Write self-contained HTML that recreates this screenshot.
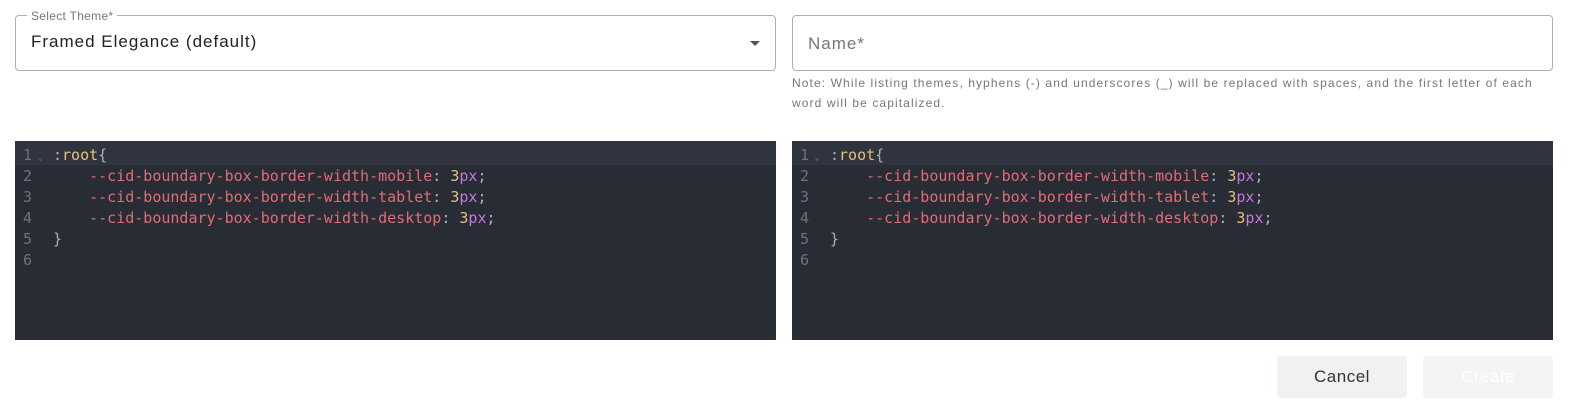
<!DOCTYPE html>
<html><head><style>
*{box-sizing:border-box}
body{margin:0;width:1571px;height:414px;background:#fff;font-family:"Liberation Sans",sans-serif;position:relative;overflow:hidden}
.fs{position:absolute;left:15px;top:15px;width:761px;height:56px;border:1px solid #b0b0b0;border-radius:4px}
.lg{position:absolute;left:27px;top:9px;background:#fff;padding:0 4px;font-size:12px;color:#777;letter-spacing:.3px}
.val{position:absolute;left:31px;top:32px;font-size:17px;color:#222;letter-spacing:1px}
.arr{position:absolute;left:750px;top:41px;width:0;height:0;border-left:5px solid transparent;border-right:5px solid transparent;border-top:5px solid #555}
.nm{position:absolute;left:792px;top:15px;width:761px;height:56px;border:1px solid #b0b0b0;border-radius:4px}
.nm span{position:absolute;left:15px;top:18px;font-size:17px;color:#777;letter-spacing:1px}
.note{position:absolute;left:792px;top:73px;width:770px;font-size:12px;color:#777;line-height:20px;letter-spacing:1.1px;white-space:nowrap}
.ed{position:absolute;top:141px;width:761px;height:199px;background:#282c34;font-family:"DejaVu Sans Mono",monospace;font-size:15px}
.ln{height:21px;line-height:21px;position:relative;white-space:pre;color:#abb2bf;top:1px}
.ln:first-child{background:#2f343e;height:24px;line-height:28px;top:0}
.n{position:absolute;left:8px;color:#6b7280;width:20px}
.c{position:absolute;left:38px}
.r{color:#e06c75}.y{color:#e5c07b}.p{color:#c678dd}
.btn{position:absolute;top:356px;width:130px;height:42px;border-radius:4px;background:#f0f1f1;font-size:17px;text-align:center;line-height:42px;letter-spacing:.5px}
</style></head><body>
<div class="fs"></div><div class="lg">Select Theme*</div><div class="val">Framed Elegance (default)</div><div class="arr"></div>
<div class="nm"><span>Name*</span></div>
<div class="note">Note: While listing themes, hyphens (-) and underscores (_) will be replaced with spaces, and the first letter of each<br>word will be capitalized.</div>
<div class="ed" style="left:15px">
<div class="ln"><span class="n">1<span style="font-size:9px"> ⌄</span></span><span class="c">:<span class="y">root</span>{</span></div>
<div class="ln"><span class="n">2</span><span class="c">    <span class="r">--cid-boundary-box-border-width-mobile</span>: <span class="y">3</span><span class="p">px</span>;</span></div>
<div class="ln"><span class="n">3</span><span class="c">    <span class="r">--cid-boundary-box-border-width-tablet</span>: <span class="y">3</span><span class="p">px</span>;</span></div>
<div class="ln"><span class="n">4</span><span class="c">    <span class="r">--cid-boundary-box-border-width-desktop</span>: <span class="y">3</span><span class="p">px</span>;</span></div>
<div class="ln"><span class="n">5</span><span class="c">}</span></div>
<div class="ln"><span class="n">6</span></div>
</div>
<div class="ed" style="left:792px">
<div class="ln"><span class="n">1<span style="font-size:9px"> ⌄</span></span><span class="c">:<span class="y">root</span>{</span></div>
<div class="ln"><span class="n">2</span><span class="c">    <span class="r">--cid-boundary-box-border-width-mobile</span>: <span class="y">3</span><span class="p">px</span>;</span></div>
<div class="ln"><span class="n">3</span><span class="c">    <span class="r">--cid-boundary-box-border-width-tablet</span>: <span class="y">3</span><span class="p">px</span>;</span></div>
<div class="ln"><span class="n">4</span><span class="c">    <span class="r">--cid-boundary-box-border-width-desktop</span>: <span class="y">3</span><span class="p">px</span>;</span></div>
<div class="ln"><span class="n">5</span><span class="c">}</span></div>
<div class="ln"><span class="n">6</span></div>
</div>
<div class="btn" style="left:1277px;color:#333">Cancel</div>
<div class="btn" style="left:1423px;background:#f3f5f4;color:#fff">Create</div>
</body></html>
